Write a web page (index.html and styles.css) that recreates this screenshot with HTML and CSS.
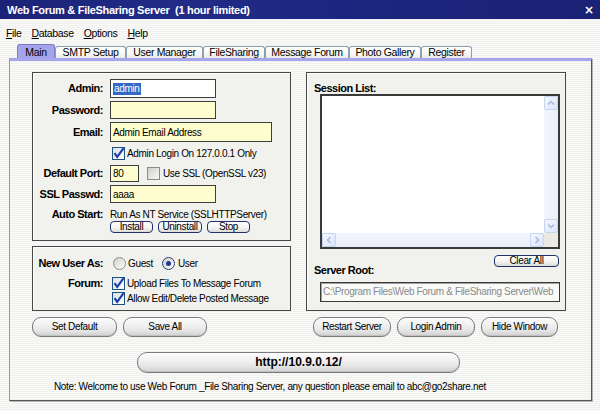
FILE: index.html
```html
<!DOCTYPE html>
<html>
<head>
<meta charset="utf-8">
<title>Web Forum &amp; FileSharing Server</title>
<link rel="stylesheet" href="styles.css">
</head>
<body>
<div class="win">
  <div class="title">
    <span class="title-text">Web Forum &amp; FileSharing Server&nbsp; (1 hour limited)</span>
    <span class="close">×</span>
  </div>
  <div class="menu">
    <span class="mi"><u>F</u>ile</span>
    <span class="mi"><u>D</u>atabase</span>
    <span class="mi"><u>O</u>ptions</span>
    <span class="mi"><u>H</u>elp</span>
  </div>
  <div class="tabs">
    <div class="tab sel t1">Main</div>
    <div class="tab t2">SMTP Setup</div>
    <div class="tab t3">User Manager</div>
    <div class="tab t4">FileSharing</div>
    <div class="tab t5">Message Forum</div>
    <div class="tab t6">Photo Gallery</div>
    <div class="tab t7">Register</div>
  </div>
  <div class="panel">
    <div class="cols">
      <div class="lcol">
        <div class="group g1">
          <div class="form">
            <div class="lbl">Admin:</div>
            <div class="fld"><div class="input in-md white"><span class="seltext">admin</span></div></div>

            <div class="lbl">Password:</div>
            <div class="fld"><div class="input in-md"></div></div>

            <div class="lbl">Email:</div>
            <div class="fld"><div class="input in-lg">Admin Email Address</div></div>

            <div class="lbl"></div>
            <div class="fld chkrow">
              <span class="cb on"><svg width="13" height="13" viewBox="0 0 13 13"><path d="M2.5 6.2 L5.2 9.8 L11.6 1.2" fill="none" stroke="#1f3fae" stroke-width="2.2"/></svg></span>
              <span>Admin Login On 127.0.0.1 Only</span>
            </div>

            <div class="lbl">Default Port:</div>
            <div class="fld portrow">
              <div class="input in-sm">80</div>
              <span class="cb off"></span>
              <span class="ssltxt">Use SSL (OpenSSL v23)</span>
            </div>

            <div class="lbl">SSL Passwd:</div>
            <div class="fld"><div class="input in-md">aaaa</div></div>

            <div class="lbl lbl-top">Auto Start:</div>
            <div class="fld autostart">
              <div class="autotxt">Run As NT Service (SSLHTTPServer)</div>
              <div class="smallbtns">
                <div class="sbtn b-install">Install</div>
                <div class="sbtn b-uninstall">Uninstall</div>
                <div class="sbtn b-stop">Stop</div>
              </div>
            </div>
          </div>
        </div>

        <div class="group g2">
          <div class="form2">
            <div class="lbl">New User As:</div>
            <div class="fld radios">
              <span class="rb"></span><span class="rtxt r-guest">Guest</span>
              <span class="rb on"></span><span class="rtxt r-user">User</span>
            </div>

            <div class="lbl lbl-end">Forum:</div>
            <div class="fld chkrow endrow">
              <span class="cb on"><svg width="13" height="13" viewBox="0 0 13 13"><path d="M2.5 6.2 L5.2 9.8 L11.6 1.2" fill="none" stroke="#1f3fae" stroke-width="2.2"/></svg></span>
              <span>Upload Files To Message Forum</span>
            </div>

            <div class="lbl"></div>
            <div class="fld chkrow endrow">
              <span class="cb on"><svg width="13" height="13" viewBox="0 0 13 13"><path d="M2.5 6.2 L5.2 9.8 L11.6 1.2" fill="none" stroke="#1f3fae" stroke-width="2.2"/></svg></span>
              <span>Allow Edit/Delete Posted Message</span>
            </div>
          </div>
        </div>

        <div class="btnrow">
          <div class="pill p-setdef">Set Default</div>
          <div class="pill p-saveall">Save All</div>
        </div>
      </div>

      <div class="rcol">
        <div class="group g3">
          <div class="rlbl">Session List:</div>
          <div class="listbox">
            <div class="lb-body"></div>
            <div class="vscroll">
              <div class="sbb"><svg width="12" height="12" viewBox="0 0 12 12"><path d="M3 7.5 L6 4.5 L9 7.5" fill="none" stroke="#a9b8d6" stroke-width="1.5"/></svg></div>
              <div class="strack"></div>
              <div class="sbb"><svg width="12" height="12" viewBox="0 0 12 12"><path d="M3 4.5 L6 7.5 L9 4.5" fill="none" stroke="#a9b8d6" stroke-width="1.5"/></svg></div>
            </div>
            <div class="hscroll">
              <div class="sbb"><svg width="12" height="12" viewBox="0 0 12 12"><path d="M7.5 3 L4.5 6 L7.5 9" fill="none" stroke="#a9b8d6" stroke-width="1.5"/></svg></div>
              <div class="strack"></div>
              <div class="sbb"><svg width="12" height="12" viewBox="0 0 12 12"><path d="M4.5 3 L7.5 6 L4.5 9" fill="none" stroke="#a9b8d6" stroke-width="1.5"/></svg></div>
            </div>
            <div class="corner"></div>
          </div>
          <div class="sbtn b-clear">Clear All</div>
          <div class="rlbl rlbl-root">Server Root:</div>
          <div class="rootin">C:\Program Files\Web Forum &amp; FileSharing Server\Web</div>
        </div>
        <div class="btnrow rbtns">
          <div class="pill p-restart">Restart Server</div>
          <div class="pill p-login">Login Admin</div>
          <div class="pill p-hide">Hide Window</div>
        </div>
      </div>
    </div>

    <div class="pill url">http://10.9.0.12/</div>
    <div class="note">Note: Welcome to use Web Forum _File Sharing Server, any question please email to abc@go2share.net</div>
  </div>
</div>
</body>
</html>
```

FILE: styles.css
```css
* { box-sizing: border-box; margin: 0; padding: 0; }
html, body { width: 600px; height: 411px; overflow: hidden; }
body {
  font-family: "Liberation Sans", Arial, sans-serif;
  font-size: 10px;
  letter-spacing: -0.35px;
  color: #000;
  background: #f4f4f2;
}
.win {
  width: 600px;
  height: 411px;
  display: flex;
  flex-direction: column;
  background: repeating-linear-gradient(180deg, #f9f9f8 0 1px, #f0f0ee 1px 2px);
}

/* title bar */
.title {
  height: 19px;
  flex: none;
  display: flex;
  align-items: center;
  justify-content: space-between;
  padding: 0 6px 0 7px;
  background: linear-gradient(90deg, #1b2376 0%, #222c88 30%, #1d2680 55%, #1a2274 100%);
  color: #fff;
  font-weight: bold;
  font-size: 11px;
  letter-spacing: -0.3px;
}
.close { font-family: "DejaVu Sans", sans-serif; font-size: 12px; font-weight: bold; line-height: 1; letter-spacing: 0; }

/* menu */
.menu { height: 25px; flex: none; display: flex; padding: 8px 0 0 6px; line-height: 13px; font-size: 10.5px; }
.mi { margin-right: 10px; }

/* tabs */
.tabs { height: 14px; flex: none; display: flex; align-items: flex-end; padding-left: 17px; font-size: 10.5px; }
.tab {
  height: 12px;
  line-height: 11px;
  text-align: center;
  border: 1px solid #8d9fb0;
  border-bottom: none;
  border-radius: 3px 3px 0 0;
  background: linear-gradient(180deg, #ffffff 0%, #f7f7f4 60%, #ebebe5 100%);
}
.tab.sel {
  height: 14px;
  line-height: 14px;
  background: #a4a4ea;
  border-color: #7c7cc8;
}
.t1 { width: 38px; }
.t2 { width: 71px; }
.t3 { width: 77px; }
.t4 { width: 62px; }
.t5 { width: 84px; }
.t6 { width: 72px; }
.t7 { width: 51px; }

/* panel */
.panel {
  height: 343px;
  margin: 0 8px 0 9px;
  border-top: 3px solid #a6a6ec;
  border-left: 1px solid #9a9a9a;
  border-right: 1px solid #555;
  border-bottom: 1px solid #555;
  box-shadow: 1px 1px 0 #b4b4b4;
  padding: 11px 0 0 22px;
}
.cols { display: flex; gap: 15px; }
.lcol { width: 259px; display: flex; flex-direction: column; }
.rcol { width: 260px; display: flex; flex-direction: column; }

.group {
  border: 1px solid #474747;
  background: #f1f2ee;
  box-shadow: inset 1px 1px 0 #ffffff;
}
.g1 { height: 169px; padding-top: 6px; }
.g2 { height: 65px; margin-top: 5px; padding-top: 9px; }
.g3 { height: 239px; padding: 9px 0 0 7px; }

.lbl {
  font-weight: bold;
  font-size: 11px;
  letter-spacing: -0.5px;
  text-align: right;
  align-self: center;
  line-height: 13px;
  white-space: nowrap;
}
.lbl-top { align-self: start; padding-top: 2px; }
.lbl-end { align-self: end; }

.form {
  display: grid;
  grid-template-columns: 70px 1fr;
  grid-template-rows: 19px 18px 20px 17px 17px 18px auto;
  column-gap: 7px;
  row-gap: 3px;
}
.fld { display: flex; align-items: center; white-space: nowrap; }

.input {
  height: 100%;
  border: 1px solid #3e3e3e;
  background: #fdfdcf;
  padding: 0 2px;
  display: flex;
  align-items: center;
  white-space: nowrap;
  overflow: hidden;
}
.input.white { background: #ffffff; }
.in-md { width: 106px; }
.in-lg { width: 162px; }
.in-sm { width: 29px; }
.seltext { background: #316ac5; color: #fff; padding: 0 1px; line-height: 12px; }

.chkrow { gap: 2px; padding-left: 2px; }
.portrow .cb { margin-left: 8px; }
.ssltxt { margin-left: 3px; }

.cb {
  width: 13px;
  height: 13px;
  flex: none;
  border: 1px solid #1c5180;
  background: linear-gradient(135deg, #d9dfe8 0%, #f4f6fa 70%, #ffffff 100%);
  position: relative;
}
.cb svg { position: absolute; left: -1px; top: -1px; overflow: visible; }
.cb.off { border-color: #8a8a8a; background: linear-gradient(135deg, #cfcfc9 0%, #e9e9e5 60%, #f8f8f6 100%); }

.autostart { flex-direction: column; align-items: flex-start; padding-top: 2px; }
.autotxt { line-height: 13px; white-space: nowrap; }
.smallbtns { display: flex; gap: 5px; }

.sbtn {
  height: 12px;
  line-height: 10px;
  text-align: center;
  border: 1px solid #23306a;
  border-radius: 4px;
  background: linear-gradient(180deg, #ffffff 0%, #f3f3f1 55%, #dcdcd6 100%);
  white-space: nowrap;
}
.b-install { width: 43px; }
.b-uninstall { width: 44px; }
.b-stop { width: 43px; }

/* group 2 */
.form2 {
  display: grid;
  grid-template-columns: 70px 1fr;
  grid-template-rows: 14px 20px 15px;
  column-gap: 7px;
}
.endrow { align-self: end; height: 14px; }
.radios { padding-left: 3px; }
.rb {
  width: 13px;
  height: 13px;
  flex: none;
  border-radius: 50%;
  border: 1px solid #8a8a8a;
  background: linear-gradient(135deg, #cfcfc9 0%, #ececea 60%, #ffffff 100%);
  display: flex;
  align-items: center;
  justify-content: center;
}
.rb.on { border-color: #2a3f78; }
.rb.on::after {
  content: "";
  width: 5px;
  height: 5px;
  border-radius: 50%;
  background: #1f3a8f;
}
.r-guest { margin: 0 9px 0 2px; }
.r-user { margin-left: 3px; }

/* buttons */
.btnrow { display: flex; gap: 6px; margin-top: 6px; }
.rbtns { margin-left: 7px; }
.pill {
  height: 20px;
  line-height: 18px;
  text-align: center;
  border: 1px solid #7b7b7b;
  border-radius: 9px;
  background: linear-gradient(180deg, #fbfbfb 0%, #f1f1f1 40%, #e2e2e2 75%, #cfcfcf 100%);
  box-shadow: inset 0 1px 0 #ffffff, inset 0 -1px 0 #c0c0c0;
  white-space: nowrap;
}
.p-setdef { width: 85px; }
.p-saveall { width: 84px; }
.p-restart { width: 78px; }
.p-login { width: 78px; }
.p-hide { width: 77px; }

.url {
  width: 323px;
  height: 21px;
  line-height: 19px;
  margin: 15px 0 0 105px;
  border-radius: 10px;
  font-weight: bold;
  font-size: 12px;
  letter-spacing: 0;
}
.note { margin: 7px 0 0 22px; line-height: 13px; white-space: nowrap; }

/* right group */
.rlbl { font-weight: bold; font-size: 11px; letter-spacing: -0.5px; line-height: 12px; height: 12px; }
.listbox {
  width: 240px;
  height: 155px;
  margin-left: 6px;
  border: 2px solid #3a3a3a;
  background: #fefefe;
  display: grid;
  grid-template-columns: 1fr 14px;
  grid-template-rows: 1fr 14px;
}
.lb-body { background: #fefefe; }
.vscroll {
  display: flex;
  flex-direction: column;
  background: linear-gradient(90deg, #f2f5fd, #eaf0fb);
}
.hscroll {
  display: flex;
  background: linear-gradient(180deg, #f2f5fd, #eaf0fb);
}
.strack { flex: 1; }
.sbb {
  width: 14px;
  height: 14px;
  flex: none;
  border: 1px solid #c6d4f0;
  border-radius: 2px;
  background: linear-gradient(135deg, #f3f7ff, #dbe6fb);
  display: flex;
  align-items: center;
  justify-content: center;
}
.sbb svg { display: block; }
.corner { background: #ece9e2; }
.b-clear { width: 65px; margin: 6px 0 0 180px; }
.rlbl-root { margin-top: -3px; }
.rootin {
  width: 240px;
  height: 20px;
  margin: 6px 0 0 6px;
  border: 1px solid #3a3a3a;
  box-shadow: inset 1px 1px 0 #a0a0a0;
  background: #f9f9f7;
  color: #8a8a8a;
  padding: 0 2px;
  line-height: 18px;
  white-space: nowrap;
  overflow: hidden;
}
```
